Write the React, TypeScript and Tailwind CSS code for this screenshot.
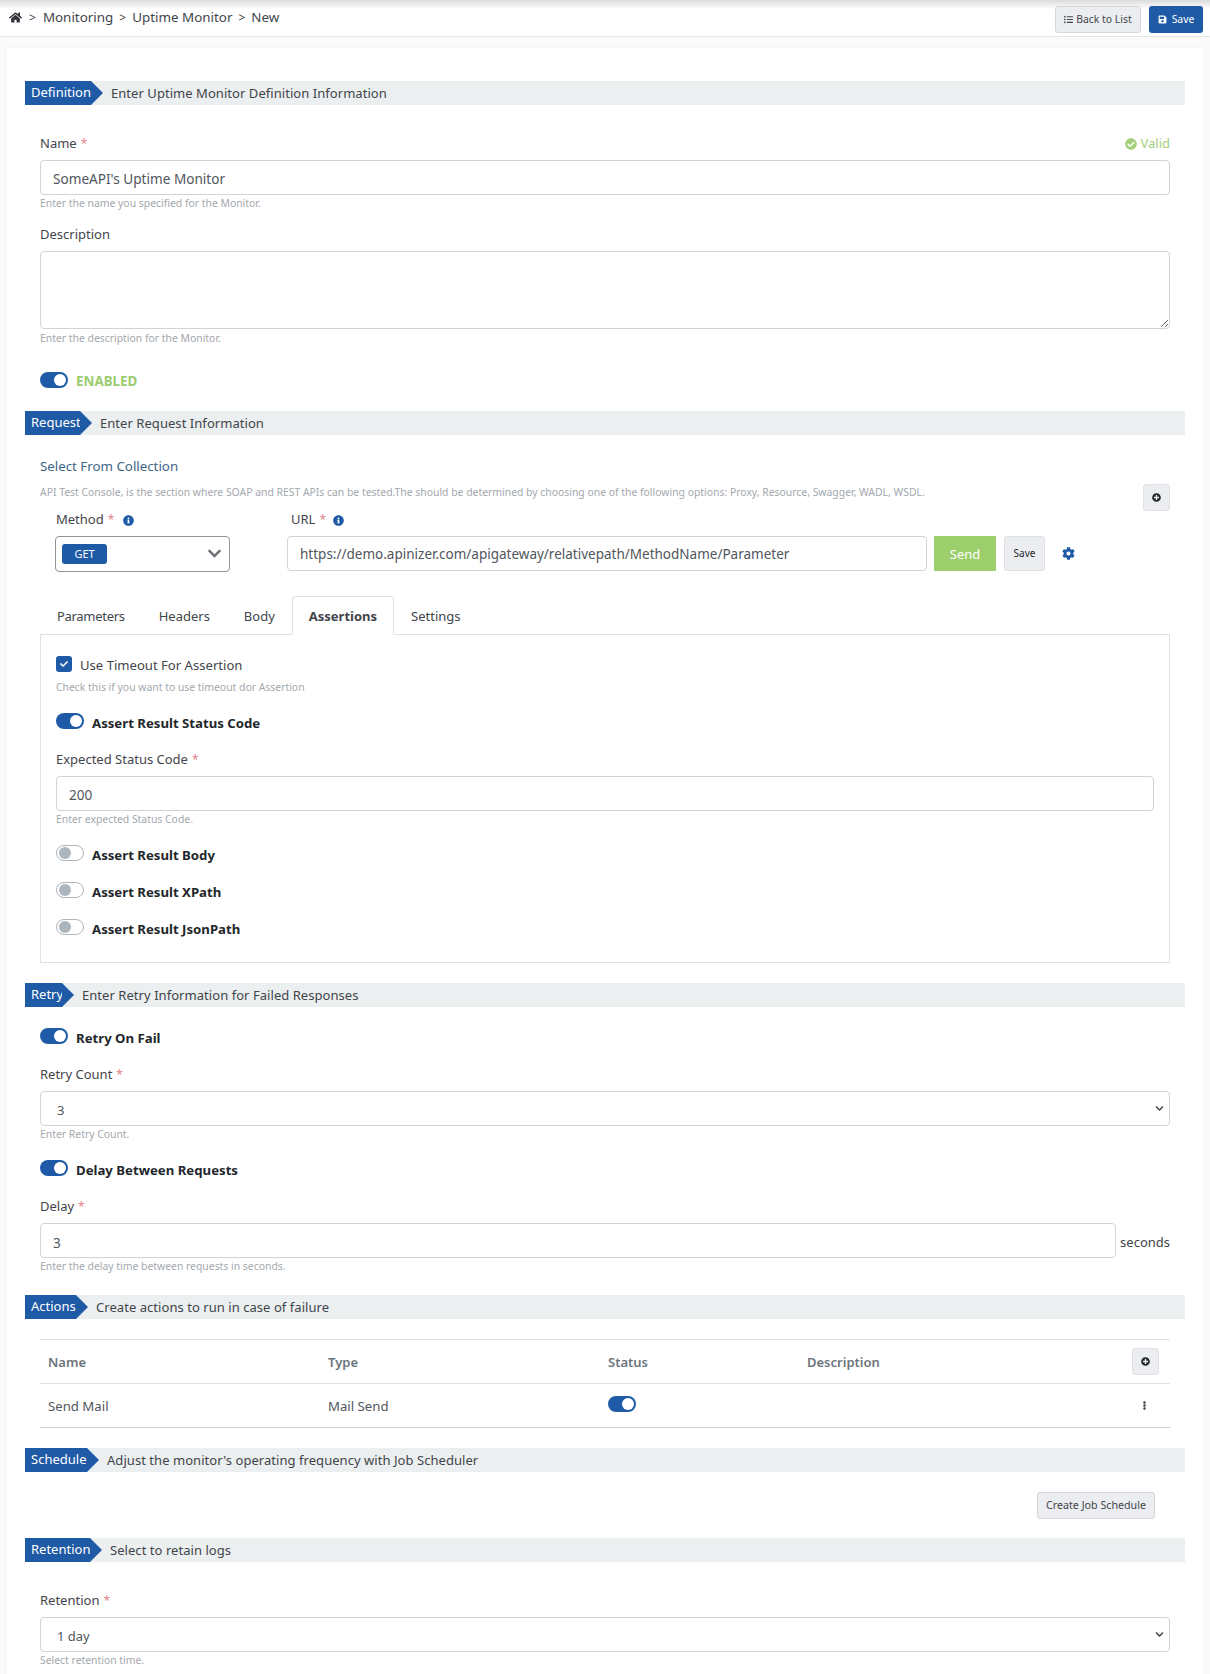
import React from "react";
import { FaHome, FaListUl, FaSave, FaCheckCircle, FaInfoCircle, FaPlusCircle, FaCog, FaEllipsisV, FaCheck, FaChevronDown } from "react-icons/fa";

function Section({ title, text, width }: { title: string; text: string; width: string }) {
  return (
    <div className="flex h-6 items-center bg-[#eceff0]">
      <div className={`flex h-6 items-center bg-[#1f5aa6] pl-[6px] text-[13px] text-white ${width}`}>{title}</div>
      <div className="h-0 w-0 border-y-[12px] border-l-[12px] border-y-transparent border-l-[#1f5aa6]" />
      <div className="ml-2 pt-[2px] text-[13px] tracking-[0.05px] text-[#3f454b]">{text}</div>
    </div>
  );
}

function Label({ children, req, className = "" }: { children: React.ReactNode; req?: boolean; className?: string }) {
  return (
    <div className={`flex h-5 items-center pt-[2px] text-[13px] text-[#3f454b] ${className}`}>
      {children}
      {req && <span className="ml-1 text-[12px] text-[#e0868c]">*</span>}
    </div>
  );
}

function Help({ children, className = "" }: { children: React.ReactNode; className?: string }) {
  return <div className={`flex h-[14px] items-center whitespace-nowrap pt-[2px] text-[10.4px] text-[#a3a8ad] ${className}`}>{children}</div>;
}

function Box({ children, className = "" }: { children?: React.ReactNode; className?: string }) {
  return (
    <div className={`flex h-[35px] items-center rounded-[4px] border border-[#ced4da] bg-white px-3 pt-[4px] text-[13.6px] text-[#50565c] ${className}`}>
      {children}
    </div>
  );
}

function SelectBox({ value }: { value: string }) {
  return (
    <div className="flex h-[35px] items-center justify-between rounded-[4px] border border-[#ced4da] bg-white pl-[16px] pr-[5px] text-[13px] text-[#50565c]">
      <span className="pt-[5px]">{value}</span>
      <FaChevronDown className="h-[9px] w-[9px] text-[#3d4349]" />
    </div>
  );
}

function Toggle({ on = true }: { on?: boolean }) {
  return on ? (
    <div className="flex h-4 w-7 shrink-0 items-center justify-end rounded-full bg-[#1f5aa6] pr-[2px]">
      <div className="h-3 w-3 rounded-full bg-white" />
    </div>
  ) : (
    <div className="flex h-4 w-7 shrink-0 items-center rounded-full border border-[#adb5bd] bg-white pl-[2px]">
      <div className="h-3 w-3 rounded-full bg-[#adb5bd]" />
    </div>
  );
}

function ToggleRow({ label, on = true, className = "" }: { label: string; on?: boolean; className?: string }) {
  return (
    <div className={`flex h-4 items-center gap-2 ${className}`}>
      <Toggle on={on} />
      <span className="pt-[6px] text-[13.2px] font-bold text-[#23272b]">{label}</span>
    </div>
  );
}

function IconButton({ className = "" }: { className?: string }) {
  return (
    <div className={`flex h-[27px] w-[27px] shrink-0 items-center justify-center rounded-[3px] border border-[#dfe1e5] bg-[#ecedf1] ${className}`}>
      <FaPlusCircle className="h-[9px] w-[9px] text-[#23272b]" />
    </div>
  );
}

export default function App() {
  return (
    <div className="h-[1674px] overflow-hidden bg-[#fafafa]" style={{ fontFamily: '"Noto Sans", "Open Sans", sans-serif' }}>
      {/* Top bar */}
      <div className="flex h-[37px] items-start justify-between border-b border-[#e3e5e7] bg-gradient-to-b from-[#dcdcdc] via-white via-[25%] to-white pl-[9px] pr-[7px] pt-[6px]">
        <div className="flex h-[23px] items-center text-[13.4px] text-[#3f454b]">
          <FaHome className="h-[13px] w-[13px] text-[#2f3337]" />
          <span className="ml-[7px] mr-[7px] text-[12px]">&gt;</span>
          <span>Monitoring</span>
          <span className="mx-[6px] text-[12px]">&gt;</span>
          <span>Uptime Monitor</span>
          <span className="mx-[6px] text-[12px]">&gt;</span>
          <span>New</span>
        </div>
        <div className="flex gap-2">
          <div className="flex h-[27px] w-[86px] items-center justify-center gap-[3px] rounded-[3px] border border-[#d5d7db] bg-[#ecedf1] text-[10.4px] text-[#3f454b]">
            <FaListUl className="h-[9px] w-[9px]" />
            Back to List
          </div>
          <div className="flex h-[27px] w-[54px] items-center justify-center gap-[5px] rounded-[3px] bg-[#1f5aa6] text-[10.4px] text-white">
            <FaSave className="h-[9px] w-[9px]" />
            Save
          </div>
        </div>
      </div>

      {/* Card */}
      <div className="mx-[7px] mt-[11px] h-[1700px] bg-white px-[18px] pt-[33px] shadow-[0_0_6px_rgba(0,0,0,0.03)]">
        <Section title="Definition" text="Enter Uptime Monitor Definition Information" width="w-[66px]" />
        <div className="px-[15px]">
          <div className="mt-7 flex h-5 items-center justify-between">
            <Label req>Name</Label>
            <div className="flex items-center gap-[3px] pt-[2px] text-[13px] text-[#a3cf7d]">
              <FaCheckCircle className="h-3 w-3" />
              Valid
            </div>
          </div>
          <Box className="mt-[7px]">SomeAPI's Uptime Monitor</Box>
          <Help className="mt-[1px]">Enter the name you specified for the Monitor.</Help>

          <Label className="mt-[14px]">Description</Label>
          <textarea readOnly className="mt-[7px] block h-[78px] w-full rounded-[4px] border border-[#ced4da] bg-white" />
          <Help className="mt-[2px]">Enter the description for the Monitor.</Help>

          <div className="mt-[27px] flex h-4 items-center gap-2">
            <Toggle />
            <span className="pt-[2px] text-[13.4px] font-bold text-[#9ccc6f]">ENABLED</span>
          </div>
        </div>

        <div className="mt-[23px]">
          <Section title="Request" text="Enter Request Information" width="w-[55px]" />
        </div>
        <div className="px-[15px]">
          <div className="mt-[21px] flex h-5 items-center pt-[2px] text-[13.3px] text-[#3d6587]">Select From Collection</div>
          <div className="mt-2 flex h-[27px] items-start justify-between">
            <Help className="mt-[1px]">API Test Console, is the section where SOAP and REST APIs can be tested.The should be determined by choosing one of the following options: Proxy, Resource, Swagger, WADL, WSDL.</Help>
            <IconButton />
          </div>

          <div className="-mt-[2px] flex items-start">
            <div className="ml-[15px] w-[175px]">
              <Label className="pl-[1px]" req>
                Method
                <FaInfoCircle className="order-last ml-[9px] h-[11px] w-[11px] text-[#1f5aa6]" />
              </Label>
              <div className="mt-[7px] flex h-[36px] items-center justify-between rounded-[4px] border border-[#8f959b] bg-white pl-[6px] pr-[7px]">
                <div className="flex h-5 w-[45px] items-center justify-center rounded-[3px] bg-[#1f5aa6] pt-px text-[11px] text-white">GET</div>
                <FaChevronDown className="-mt-[2px] h-[15px] w-[15px] text-[#6b7177]" />
              </div>
            </div>
            <div className="ml-[57px]">
              <Label className="pl-[4px]" req>
                URL
                <FaInfoCircle className="order-last ml-[7px] h-[11px] w-[11px] text-[#1f5aa6]" />
              </Label>
              <div className="mt-[7px] flex items-center">
                <Box className="w-[640px] !pt-[2px] !text-[13.5px]">https://demo.apinizer.com/apigateway/relativepath/MethodName/Parameter</Box>
                <div className="ml-[7px] flex h-[35px] w-[62px] items-center justify-center bg-[#9ccf6c] pt-[2px] text-[13px] text-white">Send</div>
                <div className="ml-2 flex h-[35px] w-[41px] items-center justify-center rounded-[3px] border border-[#dfe1e5] bg-[#ecedf1] text-[10px] text-[#23272b]">Save</div>
                <FaCog className="ml-[17px] h-[13px] w-[13px] text-[#1f5aa6]" />
              </div>
            </div>
          </div>

          {/* Tabs */}
          <div className="mt-6 flex h-[39px] text-[13px] text-[#3f454b]">
            <div className="flex items-center border border-transparent px-4 pt-[2px] tracking-[-0.3px]">Parameters</div>
            <div className="flex items-center border border-transparent px-4 pt-[2px]">Headers</div>
            <div className="flex items-center border border-transparent px-4 pt-[2px]">Body</div>
            <div className="relative z-10 flex items-center rounded-t-[4px] border border-[#dee2e6] border-b-white bg-white px-4 pt-[2px] font-bold">Assertions</div>
            <div className="flex items-center border border-transparent px-4 pt-[2px]">Settings</div>
          </div>
          <div className="-mt-px h-[329px] border border-[#dee2e6] px-[15px] pt-[21px]">
            <div className="flex h-4 items-center gap-2">
              <div className="flex h-4 w-4 items-center justify-center rounded-[3px] bg-[#1f5aa6]">
                <FaCheck className="h-2 w-2 text-white" />
              </div>
              <span className="pt-[4px] text-[13.1px] text-[#3f454b]">Use Timeout For Assertion</span>
            </div>
            <Help className="mt-2">Check this if you want to use timeout dor Assertion</Help>
            <ToggleRow className="mt-[19px]" label="Assert Result Status Code" />
            <Label className="mt-5" req>Expected Status Code</Label>
            <Box className="mt-[7px]">200</Box>
            <Help className="mt-[1px]">Enter expected Status Code.</Help>
            <ToggleRow className="mt-[19px]" on={false} label="Assert Result Body" />
            <ToggleRow className="mt-[21px]" on={false} label="Assert Result XPath" />
            <ToggleRow className="mt-[21px]" on={false} label="Assert Result JsonPath" />
          </div>
        </div>

        <div className="mt-5">
          <Section title="Retry" text="Enter Retry Information for Failed Responses" width="w-[37px]" />
        </div>
        <div className="px-[15px]">
          <ToggleRow className="mt-[21px]" label="Retry On Fail" />
          <Label className="mt-5" req>Retry Count</Label>
          <div className="mt-[7px]"><SelectBox value="3" /></div>
          <Help className="mt-[1px]">Enter Retry Count.</Help>
          <ToggleRow className="mt-[19px]" label="Delay Between Requests" />
          <Label className="mt-5" req>Delay</Label>
          <div className="mt-[7px] flex items-center">
            <Box className="w-[1077px] !pt-[5px]">3</Box>
            <span className="ml-[4px] pt-[5px] text-[13px] text-[#3f454b]">seconds</span>
          </div>
          <Help className="mt-[1px]">Enter the delay time between requests in seconds.</Help>
        </div>

        <div className="mt-[22px]">
          <Section title="Actions" text="Create actions to run in case of failure" width="w-[51px]" />
        </div>
        <div className="mx-[15px] mt-5 border-b border-[#ccd0d4] border-t border-t-[#dee2e6]">
          <div className="grid h-[44px] grid-cols-[280px_280px_199px_1fr] items-center border-b border-[#dee2e6] pl-2 text-[13px] font-semibold text-[#6c757d]">
            <div className="pt-[2px]">Name</div>
            <div className="pt-[2px]">Type</div>
            <div className="pt-[2px]">Status</div>
            <div className="flex items-center justify-between pr-[11px]">
              <span className="pt-[2px]">Description</span>
              <IconButton />
            </div>
          </div>
          <div className="grid h-[43px] grid-cols-[280px_280px_199px_1fr] items-center pl-2 text-[13.2px] text-[#50565c]">
            <div className="pt-[2px]">Send Mail</div>
            <div className="pt-[2px]">Mail Send</div>
            <div className="mb-1"><Toggle /></div>
            <div className="flex justify-end pr-[21px]">
              <FaEllipsisV className="h-[9px] w-[9px] text-[#3f454b]" />
            </div>
          </div>
        </div>

        <div className="mt-5">
          <Section title="Schedule" text="Adjust the monitor's operating frequency with Job Scheduler" width="w-[62px]" />
        </div>
        <div className="mt-5 flex justify-end pr-[30px]">
          <div className="flex h-[27px] w-[118px] items-center justify-center rounded-[3px] border border-[#d5d7db] bg-[#ecedf1] text-[10.7px] text-[#3f454b]">Create Job Schedule</div>
        </div>

        <div className="mt-[19px]">
          <Section title="Retention" text="Select to retain logs" width="w-[65px]" />
        </div>
        <div className="px-[15px]">
          <Label className="mt-7" req>Retention</Label>
          <div className="mt-[7px]"><SelectBox value="1 day" /></div>
          <Help className="mt-[1px]">Select retention time.</Help>
        </div>
      </div>
    </div>
  );
}
